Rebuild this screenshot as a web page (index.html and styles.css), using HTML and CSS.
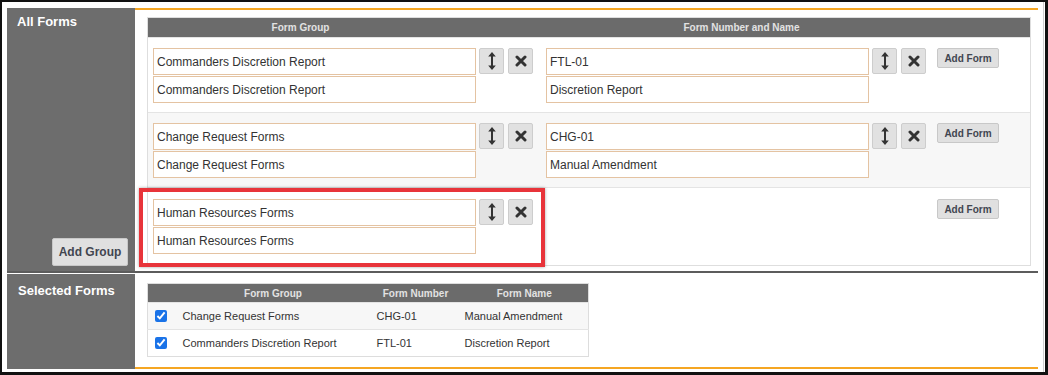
FILE: index.html
```html
<!DOCTYPE html>
<html lang="en">
<head>
<meta charset="utf-8">
<title>Forms</title>
<link rel="stylesheet" href="styles.css">
</head>
<body>
<div class="frame">
  <div class="page">
    <section class="sec sec-all">
      <div class="side">
        <h2 class="side-title">All Forms</h2>
        <button class="btn btn-group" type="button">Add Group</button>
      </div>
      <div class="main main-all">
        <div class="grid">
          <div class="ghead">
            <div class="hcell hcell-group">Form Group</div>
            <div class="hcell hcell-forms">Form Number and Name</div>
          </div>

          <div class="grow">
            <div class="gcell group">
              <div class="inputs">
                <input class="field" type="text" value="Commanders Discretion Report">
                <input class="field" type="text" value="Commanders Discretion Report">
              </div>
              <button class="ibtn" type="button"><svg class="i-move" viewBox="0 0 10 18" width="10" height="18"><path d="M5 0 L1.2 4.6 L8.8 4.6 Z M5 18 L1.2 13.4 L8.8 13.4 Z" fill="#333"/><rect x="4" y="4" width="2" height="10" fill="#333"/></svg></button>
              <button class="ibtn" type="button"><svg class="i-del" viewBox="0 0 12 12" width="12" height="12"><path d="M2 2 L10 10 M10 2 L2 10" stroke="#333" stroke-width="3" stroke-linecap="round"/></svg></button>
            </div>
            <div class="gcell forms">
              <div class="inputs">
                <input class="field" type="text" value="FTL-01">
                <input class="field" type="text" value="Discretion Report">
              </div>
              <button class="ibtn" type="button"><svg class="i-move" viewBox="0 0 10 18" width="10" height="18"><path d="M5 0 L1.2 4.6 L8.8 4.6 Z M5 18 L1.2 13.4 L8.8 13.4 Z" fill="#333"/><rect x="4" y="4" width="2" height="10" fill="#333"/></svg></button>
              <button class="ibtn" type="button"><svg class="i-del" viewBox="0 0 12 12" width="12" height="12"><path d="M2 2 L10 10 M10 2 L2 10" stroke="#333" stroke-width="3" stroke-linecap="round"/></svg></button>
              <button class="btn btn-form" type="button">Add Form</button>
            </div>
          </div>

          <div class="grow grow-alt">
            <div class="gcell group">
              <div class="inputs">
                <input class="field" type="text" value="Change Request Forms">
                <input class="field" type="text" value="Change Request Forms">
              </div>
              <button class="ibtn" type="button"><svg class="i-move" viewBox="0 0 10 18" width="10" height="18"><path d="M5 0 L1.2 4.6 L8.8 4.6 Z M5 18 L1.2 13.4 L8.8 13.4 Z" fill="#333"/><rect x="4" y="4" width="2" height="10" fill="#333"/></svg></button>
              <button class="ibtn" type="button"><svg class="i-del" viewBox="0 0 12 12" width="12" height="12"><path d="M2 2 L10 10 M10 2 L2 10" stroke="#333" stroke-width="3" stroke-linecap="round"/></svg></button>
            </div>
            <div class="gcell forms">
              <div class="inputs">
                <input class="field" type="text" value="CHG-01">
                <input class="field" type="text" value="Manual Amendment">
              </div>
              <button class="ibtn" type="button"><svg class="i-move" viewBox="0 0 10 18" width="10" height="18"><path d="M5 0 L1.2 4.6 L8.8 4.6 Z M5 18 L1.2 13.4 L8.8 13.4 Z" fill="#333"/><rect x="4" y="4" width="2" height="10" fill="#333"/></svg></button>
              <button class="ibtn" type="button"><svg class="i-del" viewBox="0 0 12 12" width="12" height="12"><path d="M2 2 L10 10 M10 2 L2 10" stroke="#333" stroke-width="3" stroke-linecap="round"/></svg></button>
              <button class="btn btn-form" type="button">Add Form</button>
            </div>
          </div>

          <div class="grow grow-last">
            <div class="gcell group">
              <div class="inputs">
                <input class="field" type="text" value="Human Resources Forms">
                <input class="field" type="text" value="Human Resources Forms">
              </div>
              <button class="ibtn" type="button"><svg class="i-move" viewBox="0 0 10 18" width="10" height="18"><path d="M5 0 L1.2 4.6 L8.8 4.6 Z M5 18 L1.2 13.4 L8.8 13.4 Z" fill="#333"/><rect x="4" y="4" width="2" height="10" fill="#333"/></svg></button>
              <button class="ibtn" type="button"><svg class="i-del" viewBox="0 0 12 12" width="12" height="12"><path d="M2 2 L10 10 M10 2 L2 10" stroke="#333" stroke-width="3" stroke-linecap="round"/></svg></button>
            </div>
            <div class="gcell forms">
              <button class="btn btn-form" type="button">Add Form</button>
            </div>
            <div class="highlight"></div>
          </div>
        </div>
      </div>
    </section>

    <section class="sec sec-sel">
      <div class="side">
        <h2 class="side-title">Selected Forms</h2>
      </div>
      <div class="main main-sel">
        <table class="sel">
          <thead>
            <tr>
              <th class="c-chk"></th>
              <th class="c-grp">Form Group</th>
              <th class="c-num">Form Number</th>
              <th class="c-name">Form Name</th>
            </tr>
          </thead>
          <tbody>
            <tr class="row-alt">
              <td class="c-chk"><input class="chk" type="checkbox" checked></td>
              <td class="c-grp">Change Request Forms</td>
              <td class="c-num">CHG-01</td>
              <td class="c-name">Manual Amendment</td>
            </tr>
            <tr>
              <td class="c-chk"><input class="chk" type="checkbox" checked></td>
              <td class="c-grp">Commanders Discretion Report</td>
              <td class="c-num">FTL-01</td>
              <td class="c-name">Discretion Report</td>
            </tr>
          </tbody>
        </table>
      </div>
    </section>
  </div>
</div>
</body>
</html>
```

FILE: styles.css
```css
* { box-sizing: border-box; }

html, body {
  margin: 0;
  padding: 0;
  background: #fff;
}

body {
  font-family: "Liberation Sans", Arial, sans-serif;
  color: #333;
}

.frame {
  width: 1048px;
  height: 375px;
  border-style: solid;
  border-color: #111;
  border-width: 2px 3px 3px 2px;
  padding-right: 1px;
  background: #fff;
}

.page {
  height: 100%;
  border-right: 1px solid #cfcfcf;
  padding: 6px 5px 3px 5px;
  display: flex;
  flex-direction: column;
}

.sec {
  display: flex;
}

.sec-all {
  height: 265px;
  flex: none;
  border-bottom: 2px solid #5c5c5c;
}

.sec-sel {
  margin-top: 1px;
  flex: 1;
}

.side {
  width: 128px;
  flex: none;
  background: #6d6d6d;
  display: flex;
  flex-direction: column;
  justify-content: space-between;
  align-items: flex-end;
  padding: 6px 7px 5px 10px;
}

.sec-sel .side {
  padding-top: 9px;
  padding-left: 11px;
}

.side-title {
  align-self: flex-start;
  margin: 0;
  font-size: 13px;
  line-height: 15px;
  font-weight: bold;
  color: #fff;
}

.main {
  flex: 1;
  min-width: 0;
}

.main-all {
  border-top: 2px solid #f5a623;
  padding: 7px 7px 0 12px;
}

.main-sel {
  border-bottom: 2px solid #f5a623;
  padding: 9px 7px 0 12px;
}

/* buttons */
.btn {
  font-family: "Liberation Sans", Arial, sans-serif;
  font-weight: bold;
  color: #424650;
  background: #e0e0e0;
  border: 1px solid #c8c8c8;
  border-radius: 2px;
  padding: 0;
  cursor: pointer;
}

.btn-group {
  width: 76px;
  height: 28px;
  font-size: 12px;
}

.btn-form {
  width: 62px;
  height: 20px;
  font-size: 10px;
  margin-left: auto;
}

.ibtn {
  width: 25px;
  height: 26px;
  margin-left: 3px;
  padding: 0;
  background: #e1e1e1;
  border: 1px solid #cdcdcd;
  border-radius: 2px;
  display: flex;
  align-items: center;
  justify-content: center;
  flex: none;
}

.ibtn + .ibtn {
  margin-left: 4px;
}

/* main grid */
.grid {
  border: 1px solid #dedede;
}

.ghead {
  display: flex;
  height: 19px;
  background: #6b6b6b;
  color: #e2e2e2;
  font-size: 10px;
  font-weight: bold;
  line-height: 19px;
}

.hcell {
  text-align: center;
}

.hcell-group {
  width: 305px;
}

.hcell-forms {
  flex: 1;
}

.grow {
  position: relative;
  display: flex;
  align-items: flex-start;
  padding: 10px 5px 9px 5px;
  border-top: 1px solid #e4e4e4;
  background: #fff;
}

.grow-alt {
  background: #f7f7f7;
}

.grow-last {
  padding-top: 11px;
  padding-bottom: 11px;
}

.gcell {
  display: flex;
  align-items: flex-start;
}

.group {
  width: 393px;
}

.forms {
  width: 453px;
}

.inputs {
  display: flex;
  flex-direction: column;
  gap: 1px;
  width: 323px;
  flex: none;
}

.field {
  display: block;
  width: 100%;
  height: 27px;
  margin: 0;
  border: 1px solid #e4c3a2;
  padding: 0 3px;
  font-family: "Liberation Sans", Arial, sans-serif;
  font-size: 12px;
  color: #333;
  background: #fff;
  outline: none;
}

.highlight {
  position: absolute;
  left: -9px;
  top: 0;
  width: 406px;
  height: 79px;
  border: 4px solid #e8343a;
  box-shadow: 0 0 3px rgba(0, 0, 0, 0.35);
  pointer-events: none;
}

/* selected table */
.sel {
  border-collapse: collapse;
  border: 1px solid #dddddd;
  width: 441px;
  table-layout: fixed;
}

.sel th {
  height: 19px;
  padding: 0;
  background: #6b6b6b;
  color: #e2e2e2;
  font-size: 10px;
  font-weight: bold;
  text-align: center;
}

.sel td {
  height: 27px;
  padding: 0;
  font-size: 11px;
  color: #333;
  border-top: 1px solid #e4e4e4;
  vertical-align: middle;
  white-space: nowrap;
  background: #fff;
}

.sel .row-alt td {
  background: #f7f7f7;
}

.sel .c-chk { width: 28px; }
.sel .c-grp { width: 195px; }
.sel .c-num { width: 90px; }
.sel .c-name { width: 128px; }

.sel td.c-chk { padding-left: 7px; }
.sel td.c-grp { padding-left: 7px; }
.sel td.c-num { padding-left: 6px; }
.sel td.c-name { padding-left: 4px; }

.chk {
  display: block;
  margin: 0;
  width: 12px;
  height: 12px;
  accent-color: #1a73e8;
}
```
